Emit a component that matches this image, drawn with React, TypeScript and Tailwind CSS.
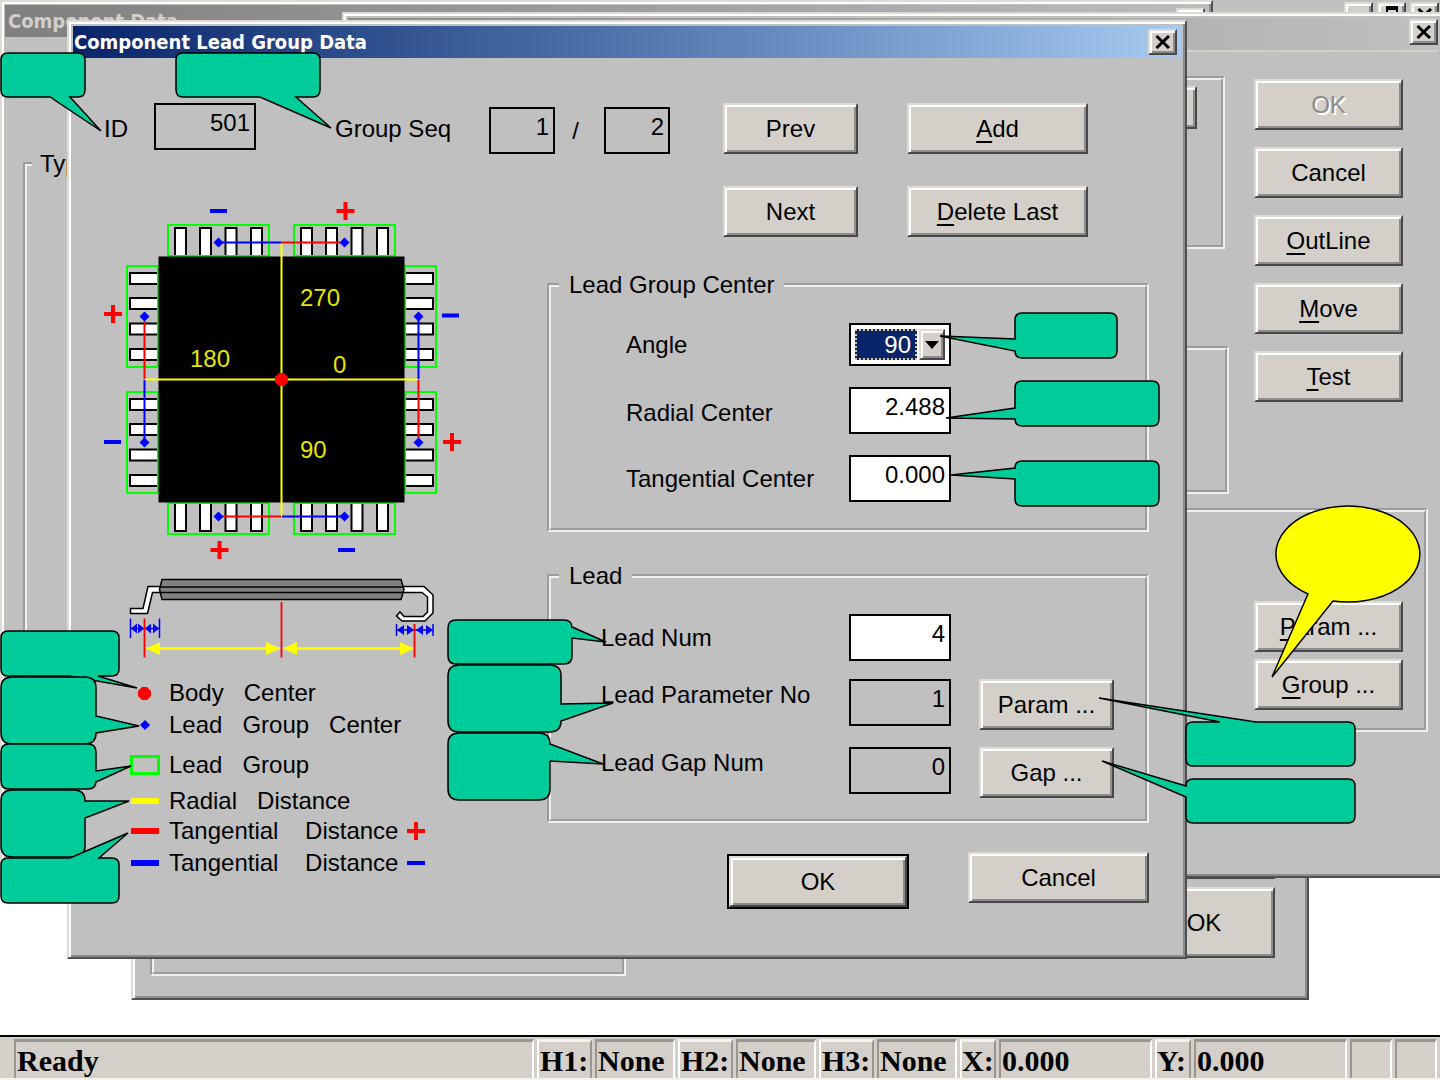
import React from 'react';

const raised =
    'border-2 border-t-[#dedad4] border-l-[#dedad4] border-r-[#484848] border-b-[#484848] shadow-[inset_2px_2px_0_#ffffff,inset_-2px_-2px_0_#8c8c8c]';
const windowFrame =
    'border-2 border-t-[#dedad4] border-l-[#dedad4] border-r-[#505050] border-b-[#505050] shadow-[inset_2px_2px_0_#ffffff,inset_-2px_-2px_0_#8c8c8c]';
const etched = 'border-4 [border-style:groove] border-[#f0f0f0]';
const fieldBox = 'w-full h-[47px] border-2 border-black pr-1 pb-2 text-right text-black outline-none';

interface Win32ButtonProps {
    label: string;
    mnemonic?: boolean;
    disabled?: boolean;
    className?: string;
}

const Win32Button: React.FC<Win32ButtonProps> = ({ label, mnemonic, disabled, className = '' }) => (
    <button
        type="button"
        disabled={disabled}
        className={`${raised} h-[51px] bg-[#d4cfc8] whitespace-nowrap leading-7 ${disabled ? 'text-[#8c8c8c] [text-shadow:2px_2px_0_#ffffff]' : 'text-black'} ${className}`}
    >
        {mnemonic ? <u className="decoration-2 underline-offset-4">{label[0]}</u> : label[0]}
        {label.slice(1)}
    </button>
);

const CloseButton = () => (
    <button type="button" aria-label="Close" className={`${raised} flex h-[26px] w-[29px] items-center justify-center bg-[#d4cfc8]`}>
        <svg width="16" height="14" viewBox="0 0 16 14" stroke="#000" strokeWidth="3">
            <path d="M1.5 1 L14 13 M14 1 L1.5 13" />
        </svg>
    </button>
);

/* ---------- callout balloons ---------- */

type Point = [number, number];

interface Balloon {
    box: [number, number, number, number];
    r: number;
    side: 'top' | 'right' | 'bottom' | 'left';
    from: number;
    to: number;
    tip: Point;
}

const balloons: Balloon[] = [
    { box: [1, 53, 85, 97], r: 7, side: 'bottom', from: 50, to: 70, tip: [101, 131] },
    { box: [176, 53, 320, 97], r: 7, side: 'bottom', from: 260, to: 296, tip: [331, 128] },
    { box: [1015, 313, 1117, 358], r: 7, side: 'left', from: 339, to: 351, tip: [940, 336] },
    { box: [1015, 381, 1159, 426], r: 7, side: 'left', from: 408, to: 419, tip: [946, 418] },
    { box: [1015, 461, 1159, 506], r: 7, side: 'left', from: 468, to: 479, tip: [951, 475] },
    { box: [448, 620, 572, 664], r: 8, side: 'right', from: 627, to: 638, tip: [606, 642] },
    { box: [448, 665, 561, 732], r: 11, side: 'right', from: 704, to: 721, tip: [613, 703] },
    { box: [448, 733, 550, 800], r: 11, side: 'right', from: 744, to: 761, tip: [603, 764] },
    { box: [1, 631, 119, 676], r: 7, side: 'bottom', from: 69, to: 98, tip: [137, 688] },
    { box: [1, 677, 96, 744], r: 11, side: 'right', from: 716, to: 733, tip: [139, 726] },
    { box: [1, 744, 96, 789], r: 8, side: 'right', from: 771, to: 782, tip: [131, 766] },
    { box: [1, 790, 85, 857], r: 11, side: 'right', from: 801, to: 818, tip: [129, 801] },
    { box: [1, 858, 119, 903], r: 7, side: 'top', from: 70, to: 99, tip: [128, 833] },
    { box: [1186, 722, 1355, 766], r: 7, side: 'top', from: 1220, to: 1256, tip: [1099, 698] },
    { box: [1186, 779, 1355, 823], r: 7, side: 'left', from: 786, to: 797, tip: [1102, 761] },
];

const balloonPath = ({ box: [x1, y1, x2, y2], r, side, from, to, tip }: Balloon) => {
    const t = `L${tip[0]} ${tip[1]}`;
    return [
        `M${x1 + r} ${y1}`,
        side === 'top' ? `L${from} ${y1} ${t} L${to} ${y1}` : '',
        `L${x2 - r} ${y1} Q${x2} ${y1} ${x2} ${y1 + r}`,
        side === 'right' ? `L${x2} ${from} ${t} L${x2} ${to}` : '',
        `L${x2} ${y2 - r} Q${x2} ${y2} ${x2 - r} ${y2}`,
        side === 'bottom' ? `L${to} ${y2} ${t} L${from} ${y2}` : '',
        `L${x1 + r} ${y2} Q${x1} ${y2} ${x1} ${y2 - r}`,
        side === 'left' ? `L${x1} ${to} ${t} L${x1} ${from}` : '',
        `L${x1} ${y1 + r} Q${x1} ${y1} ${x1 + r} ${y1} Z`,
    ].join(' ');
};

const Balloons = () => (
    <svg width="1440" height="1080" viewBox="0 0 1440 1080" className="pointer-events-none absolute top-0 left-0" stroke="#000" strokeWidth="1.5" strokeMiterlimit="3">
        {balloons.map((b, i) => (
            <path key={i} d={balloonPath(b)} fill="#00cc99" />
        ))}
        <path d="M1308 594 A72 48 0 1 1 1333 601 L1272 677 Z" fill="#ffff00" />
    </svg>
);

/* ---------- package drawing ---------- */

const Plus = ({ x, y }: { x: number; y: number }) => (
    <path d={`M${x - 9} ${y} h18 M${x} ${y - 9} v18`} stroke="#ff0000" strokeWidth="4" />
);

const Minus = ({ x, y }: { x: number; y: number }) => (
    <path d={`M${x - 8} ${y} h17`} stroke="#0000ff" strokeWidth="4" />
);

const Diamond = ({ x, y }: { x: number; y: number }) => (
    <path d={`M${x - 5} ${y} l5 -5 l5 5 l-5 5 Z`} fill="#0000ff" />
);

const groupStarts = [0, 126];
const leadSteps = [0, 25, 50.5, 76];

const PackageDrawing = () => (
    <svg width="370" height="465" viewBox="100 200 370 465" fill="none" className="block">
        {groupStarts.map(g => (
            <g key={g}>
                {leadSteps.map(s => (
                    <g key={s} fill="#fff" stroke="#000" strokeWidth="2">
                        <rect x={175 + g + s} y="228" width="11" height="30" />
                        <rect x={175 + g + s} y="501" width="11" height="30" />
                        <rect x="130" y={273 + g + s} width="30" height="11" />
                        <rect x="403" y={273 + g + s} width="30" height="11" />
                    </g>
                ))}
                <g stroke="#00ff00" strokeWidth="2">
                    <rect x={168 + g} y="225" width="101" height="31" />
                    <rect x={168 + g} y="503" width="101" height="31" />
                    <rect x="127" y={266 + g} width="31" height="101" />
                    <rect x="405" y={266 + g} width="31" height="101" />
                </g>
            </g>
        ))}
        <rect x="158.5" y="256.5" width="246" height="246" fill="#000" />

        <path d="M281.5 243 V516 M144 379.5 H418" stroke="#ffff00" strokeWidth="2" />
        <path d="M218 242.5 H281 M144.5 380 V442 M418.5 317 V379 M282 516.5 H344" stroke="#0000ff" strokeWidth="2" />
        <path d="M281 242.5 H340 M144.5 321 V379 M418.5 380 V438 M223 516.5 H281" stroke="#ff0000" strokeWidth="2" />
        <Diamond x={218.5} y={242.5} />
        <Diamond x={344.5} y={242.5} />
        <Diamond x={144.5} y={316.5} />
        <Diamond x={144.5} y={442.5} />
        <Diamond x={418.5} y={316.5} />
        <Diamond x={418.5} y={442.5} />
        <Diamond x={218.5} y={516.5} />
        <Diamond x={344.5} y={516.5} />
        <path d="M279 373 h5 l4 4 v5 l-4 4 h-5 l-4 -4 v-5 Z" fill="#ff0000" />

        <Minus x={218} y={211} />
        <Plus x={345.5} y={211} />
        <Plus x={113} y={314} />
        <Minus x={450} y={315.5} />
        <Minus x={112} y={442} />
        <Plus x={452} y={442} />
        <Plus x={219.5} y={550} />
        <Minus x={346} y={550} />

        <g fill="#e6e600" fontSize="24">
            <text x="300" y="306">270</text>
            <text x="190" y="367">180</text>
            <text x="333" y="373">0</text>
            <text x="300" y="458">90</text>
        </g>

        {/* side view */}
        <g stroke="#000" strokeWidth="1.5" fill="#fff">
            <path d="M130.5 608.5 H143 L148 586.5 H160 V592.5 H152.5 L147.5 613.5 H130.5 Z" />
            <path d="M403 586.5 H424 L433 595 V613 L425 621 H402 L396.5 616 L400 612 L404 616.5 H423 L427.5 612 V597 L422 592.5 H403 Z" />
            <path d="M162 579.5 H401 L404 589.5 L401 599.5 H162 L159.5 589.5 Z" fill="#808080" />
            <path d="M160 587 H403 M160 592.5 H403" />
        </g>
        <g stroke="#0000ff" strokeWidth="1.5" fill="#0000ff">
            <path d="M130.5 618.5 V638 M159.5 618.5 V638 M130.5 628.5 H159.5" />
            <path d="M396.5 624 V636 M433 624 V636 M396.5 630 H433" />
            <path stroke="none" d="M131 628.5 l6 -5 v10 Z M144 628.5 l-6 -5 v10 Z M145 628.5 l6 -5 v10 Z M159 628.5 l-6 -5 v10 Z" />
            <path stroke="none" d="M397 630 l7 -5 v10 Z M414 630 l-7 -5 v10 Z M416 630 l7 -5 v10 Z M433 630 l-7 -5 v10 Z" />
        </g>
        <path d="M146 648.5 H280 M283 648.5 H414" stroke="#ffff00" strokeWidth="2.5" />
        <path d="M146 648.5 l14 -6.5 v13 Z M280 648.5 l-14 -6.5 v13 Z M283 648.5 l14 -6.5 v13 Z M414 648.5 l-14 -6.5 v13 Z" fill="#ffff00" />
        <path d="M144.5 618.5 V657.5 M281.5 602 V657.5 M414.5 624 V657.5" stroke="#ff0000" strokeWidth="1.8" />
    </svg>
);

const Legend = () => (
    <ul className="grid grid-cols-1 grid-rows-[32px_32px_48px_24px_36px_28px] pl-[30px] leading-6 whitespace-pre">
        <li className="flex items-center gap-[9px]">
            <svg width="30" height="14" viewBox="0 0 30 14"><path d="M12 1 h5 l4 4 v5 l-4 4 h-5 l-4 -4 v-5 Z" fill="#ff0000" /></svg>
            {'Body   Center'}
        </li>
        <li className="flex items-center gap-[9px]">
            <svg width="30" height="14" viewBox="0 0 30 14"><path d="M10 7 l5 -5 l5 5 l-5 5 Z" fill="#0000ff" /></svg>
            {'Lead   Group   Center'}
        </li>
        <li className="flex items-center gap-[9px]">
            <span className="h-5 w-[30px] border-[3px] border-[#00ff00]" />
            {'Lead   Group'}
        </li>
        <li className="flex items-center gap-[9px]">
            <span className="mx-px h-[6px] w-7 bg-[#ffff00]" />
            {'Radial   Distance'}
        </li>
        <li className="flex items-center gap-[9px]">
            <span className="mx-px h-[6px] w-7 bg-[#ff0000]" />
            {'Tangential    Distance'}
            <svg width="18" height="18" viewBox="0 0 18 18"><path d="M0 9 h18 M9 0 v18" stroke="#ff0000" strokeWidth="4" /></svg>
        </li>
        <li className="flex items-center gap-[9px]">
            <span className="mx-px h-[6px] w-7 bg-[#0000ff]" />
            {'Tangential    Distance'}
            <svg width="18" height="18" viewBox="0 0 18 18"><path d="M0 9 h18" stroke="#0000ff" strokeWidth="4" /></svg>
        </li>
    </ul>
);

/* ---------- windows ---------- */

const ComponentDataWindow = () => (
    <section className={`${windowFrame} absolute top-0 left-0 h-[878px] w-[1213px] bg-[#c0c0c0] p-[3px]`}>
        <header className="flex h-[32px] items-center bg-linear-to-r from-[#808080] to-[#bcbcbc] px-[3px]">
            <h2 className="grow font-['DejaVu_Sans_Condensed','DejaVu_Sans'] text-[20px] leading-7 font-bold text-[#d4cfc8]">Component Data</h2>
            <CloseButton />
        </header>
        <fieldset className={`${etched} mx-[18px] mt-[111px] h-[560px]`}>
            <legend className="ml-[5px] px-2 leading-8">Type</legend>
        </fieldset>
    </section>
);

const LowerWindow = () => (
    <section className={`${windowFrame} absolute top-[500px] left-[131px] flex h-[500px] w-[1178px] items-end justify-between bg-[#c0c0c0] px-4 pb-[22px]`}>
        <fieldset className={`${etched} ml-px h-[400px] w-[476px]`} />
        <div className="mr-4 mb-[18px] flex w-[142px] flex-col gap-[8px]">
            <button type="button" aria-label="Apply" className={`${raised} h-[71px] bg-[#d4cfc8]`} />
            <button type="button" className={`${raised} h-[71px] bg-[#d4cfc8] leading-7`}>OK</button>
        </div>
    </section>
);

const DetailWindow = () => (
    <section className={`${windowFrame} absolute top-[12px] left-[342px] h-[866px] w-[1102px] bg-[#c0c0c0] p-1`}>
        <header className="flex h-[32px] items-center justify-end bg-linear-to-r from-[#8c8c8c] to-[#c0c0c0] pb-1">
            <CloseButton />
        </header>
        <div className="flex justify-between border-t-2 border-[#d4cfc8] pt-[24px] pr-[35px] pl-3">
            <div className="flex flex-col items-start gap-[97px]">
                <fieldset className={`${etched} flex h-[173px] w-[865px] justify-end p-[6px] pr-[24px]`}>
                    <button type="button" aria-label="Select type" className={`${raised} h-[43px] w-[40px] bg-[#d4cfc8]`} />
                </fieldset>
                <fieldset className={`${etched} h-[148px] w-[869px]`} />
            </div>
            <div className="mt-[3px] flex w-[149px] flex-col gap-[17px]">
                <Win32Button label="OK" disabled />
                <Win32Button label="Cancel" />
                <Win32Button label="OutLine" mnemonic />
                <Win32Button label="Move" mnemonic />
                <Win32Button label="Test" mnemonic />
            </div>
        </div>
        <fieldset className={`${etched} mt-[14px] mr-[10px] ml-3 flex h-[224px] flex-col items-end gap-[7px] pt-[89px] pr-[21px]`}>
            <Win32Button label="Param ..." mnemonic className="w-[149px]" />
            <Win32Button label="Group ..." mnemonic className="w-[149px]" />
        </fieldset>
    </section>
);

const LeadGroupDialog = () => (
    <section className={`${windowFrame} absolute top-[20px] left-[67px] h-[939px] w-[1120px] bg-[#c0c0c0] p-1`}>
        <header className="flex h-[32px] items-center justify-between bg-linear-to-r from-[#0a246a] to-[#a6caf0] pr-1 pl-[1px]">
            <h1 className="font-['DejaVu_Sans_Condensed','DejaVu_Sans'] text-[20px] leading-7 font-bold text-white">Component Lead Group Data</h1>
            <CloseButton />
        </header>

        <div className="flex items-start pt-[45px] pl-[31px]">
            <label htmlFor="component-id" className="w-[50px] pt-[10px] leading-8">ID</label>
            <div className="w-[102px]">
                <input id="component-id" readOnly defaultValue="501" className={fieldBox} />
            </div>
            <label htmlFor="group-seq" className="ml-[79px] w-[154px] pt-[10px] leading-8">Group Seq</label>
            <div className="mt-[4px] w-[66px]">
                <input id="group-seq" readOnly defaultValue="1" className={fieldBox} />
            </div>
            <span className="w-[49px] pt-[12px] pr-2 text-center leading-8">/</span>
            <div className="mt-[4px] w-[66px]">
                <input aria-label="Group count" readOnly defaultValue="2" className={fieldBox} />
            </div>
            <div className="ml-[53px] grid grid-cols-[135px_181px] gap-x-[49px] gap-y-[32px]">
                <Win32Button label="Prev" />
                <Win32Button label="Add" mnemonic />
                <Win32Button label="Next" />
                <Win32Button label="Delete Last" mnemonic />
            </div>
        </div>

        <div className="flex">
            <div className="-mt-[37px] w-[474px] shrink-0 pl-[27px]">
                <PackageDrawing />
                <div className="mt-3">
                    <Legend />
                </div>
            </div>

            <div className="w-[602px]">
                <fieldset className={`${etched} mt-[34px] h-[261px] pl-[75px]`}>
                    <legend className="-ml-[67px] px-[10px] leading-7">Lead Group Center</legend>
                    <div className="mt-[24px] grid grid-cols-[223px_102px] items-center gap-y-[21px]">
                        <label htmlFor="angle" className="leading-8">Angle</label>
                        <div className="flex h-[43px] gap-[2px] border-2 border-black bg-white p-[4px]">
                            <select
                                id="angle"
                                defaultValue="90"
                                className="w-[62px] appearance-none border-2 border-dotted border-[#d8c88a] bg-[#0a246a] pr-1 text-right leading-7 text-white outline-none"
                            >
                                <option>0</option>
                                <option>90</option>
                                <option>180</option>
                                <option>270</option>
                            </select>
                            <span className={`${raised} flex grow items-center justify-center bg-[#d4cfc8]`}>
                                <svg width="14" height="8" viewBox="0 0 14 8"><path d="M0 0 H14 L7 8 Z" /></svg>
                            </span>
                        </div>
                        <label htmlFor="radial" className="pt-1 leading-8">Radial Center</label>
                        <input id="radial" defaultValue="2.488" className={`${fieldBox} bg-white`} />
                        <label htmlFor="tangential" className="leading-8">Tangential Center</label>
                        <input id="tangential" defaultValue="0.000" className={`${fieldBox} bg-white`} />
                    </div>
                </fieldset>

                <fieldset className={`${etched} mt-[30px] h-[261px] pl-[50px]`}>
                    <legend className="-ml-[42px] px-[10px] leading-7">Lead</legend>
                    <div className="mt-[24px] grid grid-cols-[248px_102px_135px] items-start">
                        <label htmlFor="lead-num" className="pt-[8px] leading-8">Lead Num</label>
                        <input id="lead-num" defaultValue="4" className={`${fieldBox} bg-white`} />
                        <span />
                        <label htmlFor="lead-param" className="pt-[18px] leading-8">Lead Parameter No</label>
                        <div className="pt-[18px]">
                            <input id="lead-param" readOnly defaultValue="1" className={fieldBox} />
                        </div>
                        <Win32Button label="Param ..." className="mt-[18px] ml-[28px] w-[135px]" />
                        <label htmlFor="lead-gap" className="pt-[17px] leading-8">Lead Gap Num</label>
                        <div className="pt-[17px]">
                            <input id="lead-gap" readOnly defaultValue="0" className={fieldBox} />
                        </div>
                        <Win32Button label="Gap ..." className="mt-[17px] ml-[28px] w-[135px]" />
                    </div>
                </fieldset>

                <div className="mt-[29px] flex items-start justify-end gap-[59px]">
                    <div className="mt-[2px] border-2 border-black">
                        <Win32Button label="OK" className="block w-[178px]" />
                    </div>
                    <Win32Button label="Cancel" className="w-[181px]" />
                </div>
            </div>
        </div>
    </section>
);

/* ---------- status bar ---------- */

const sunken = 'border-t-[3px] border-l-2 border-r-2 border-t-[#999590] border-l-[#999590] border-r-white';
const captionCell = 'border-t-[3px] border-l-2 border-r-2 border-t-[#f4f2ee] border-l-white border-r-[#999590]';

const StatusBar = () => (
    <footer className="flex h-[45px] shrink-0 gap-[3px] border-t-2 border-b-2 border-t-black border-b-[#f4f2ee] bg-[#d4cfc8] pt-[2px] pr-[3px] pl-[14px] font-['Liberation_Serif',serif] text-[30px] leading-[38px] font-bold">
        <div className={`${sunken} grow pl-px`}>Ready</div>
        {['H1:', 'H2:', 'H3:'].map(head => (
            <React.Fragment key={head}>
                <div className={`${captionCell} w-[55px] pl-px`}>{head}</div>
                <div className={`${sunken} w-[80px] pl-px`}>None</div>
            </React.Fragment>
        ))}
        {['X:', 'Y:'].map(axis => (
            <React.Fragment key={axis}>
                <div className={`${captionCell} w-[36px]`}>{axis}</div>
                <div className={`${sunken} w-[153px] pl-px`}>0.000</div>
            </React.Fragment>
        ))}
        <div className={`${sunken} w-[42px]`} />
        <div className={`${sunken} w-[42px]`} />
    </footer>
);

const App: React.FC = () => {
    return (
        <div className="flex min-h-screen flex-col overflow-hidden bg-white font-['Liberation_Sans',sans-serif] text-[24px] text-black">
            <main className="relative grow overflow-hidden">
                <div className="flex h-[30px] justify-end gap-1 bg-[#c0c0c0] pr-px">
                    <span className={`${raised} mt-[2px] h-[26px] w-[29px] bg-[#d4cfc8]`} />
                    <span className={`${raised} mt-[2px] flex h-[26px] w-[29px] justify-center bg-[#d4cfc8] pt-[2px]`}>
                        <span className="h-3 w-3 border-2 border-t-4 border-black" />
                    </span>
                    <div className="mt-[2px]">
                        <CloseButton />
                    </div>
                </div>
                <LowerWindow />
                <ComponentDataWindow />
                <DetailWindow />
                <LeadGroupDialog />
                <Balloons />
            </main>
            <StatusBar />
        </div>
    );
};

export default App;
